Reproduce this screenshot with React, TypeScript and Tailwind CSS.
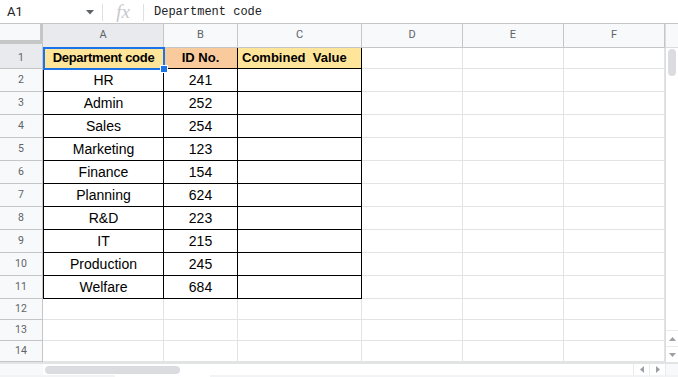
const COLS = [
  { key: "A", w: "w-[121px]" },
  { key: "B", w: "w-[74px]" },
  { key: "C", w: "w-[124px]" },
  { key: "D", w: "w-[101px]" },
  { key: "E", w: "w-[101px]" },
  { key: "F", w: "w-[101px]" },
];

const DATA: [string, string][] = [
  ["HR", "241"],
  ["Admin", "252"],
  ["Sales", "254"],
  ["Marketing", "123"],
  ["Finance", "154"],
  ["Planning", "624"],
  ["R&D", "223"],
  ["IT", "215"],
  ["Production", "245"],
  ["Welfare", "684"],
];

function RowHeader({ n, h, active }: { n: number; h: string; active?: boolean }) {
  return (
    <div
      className={`w-[43px] ${h} shrink-0 flex items-center justify-center border-r border-b border-[#c4c7c5] text-[10.5px] text-[#5f6368] font-['Roboto',sans-serif] ${
        active ? "bg-[#e8eaed]" : "bg-[#f8f9fa]"
      }`}
    >
      {n}
    </div>
  );
}

function EmptyCells() {
  return (
    <>
      <div className="w-[101px] shrink-0 border-r border-b border-[#e2e3e3]" />
      <div className="w-[101px] shrink-0 border-r border-b border-[#e2e3e3]" />
      <div className="w-[101px] shrink-0 border-r border-b border-[#e2e3e3]" />
    </>
  );
}

export default function App() {
  return (
    <div className="w-[678px] h-[377px] overflow-hidden bg-white relative font-['Liberation_Sans',Arial,sans-serif]">
      {/* Formula bar */}
      <div className="h-[24px] flex items-center border-b border-[#c4c7c5] pt-[1px]">
        <div className="w-[82px] pl-[7px] text-[13px] text-[#202124] font-['Roboto',sans-serif]">A1</div>
        <svg width="8" height="5" viewBox="0 0 8 5" className="ml-[4px]">
          <path d="M0 0h8L4 4.5z" fill="#5f6368" />
        </svg>
        <div className="ml-[8px] w-px h-[17px] bg-[#e0e0e0]" />
        <div className="w-[40px] text-center text-[19px] italic text-[#c6c9cc] font-['Liberation_Serif',serif] leading-none pb-[2px]">
          fx
        </div>
        <div className="w-px h-[17px] bg-[#e0e0e0]" />
        <div className="pl-[10px] text-[12px] text-[#202124] font-['Liberation_Mono',monospace]">Department code</div>
      </div>

      <div className="flex">
        {/* Grid */}
        <div className="w-[665px]">
          {/* Column headers */}
          <div className="flex h-[24px]">
            <div className="w-[43px] shrink-0 flex flex-col bg-[#f8f9fa]">
              <div className="h-[16px] border-r-[3px] border-[#c4c7c5]" />
              <div className="h-[4px] bg-[#c4c7c5]" />
              <div className="h-[4px] bg-[#e8eaed] border-r border-[#c4c7c5]" />
            </div>
            {COLS.map((c) => (
              <div
                key={c.key}
                className={`${c.w} shrink-0 flex items-center justify-center border-r border-b border-[#c4c7c5] text-[11px] text-[#5f6368] font-['Roboto',sans-serif] ${
                  c.key === "A" ? "bg-[#e8eaed]" : "bg-[#f8f9fa]"
                }`}
              >
                {c.key}
              </div>
            ))}
          </div>

          {/* Row 1 */}
          <div className="flex h-[21px] relative">
            <RowHeader n={1} h="h-[21px]" active />
            <div className="w-[121px] shrink-0 flex items-center justify-center bg-[#ffe599] border-l border-r border-b border-black text-[13px] font-bold text-black tracking-[-0.3px]">
              Department code
            </div>
            <div className="w-[74px] shrink-0 flex items-center justify-center bg-[#f9cb9c] border-r border-b border-black text-[13px] font-bold text-black">
              ID No.
            </div>
            <div className="w-[124px] shrink-0 flex items-center pl-[4px] bg-[#ffe599] border-r border-b border-black text-[13px] font-bold text-black whitespace-pre">
              Combined  Value
            </div>
            <EmptyCells />
            {/* Selection */}
            <div className="absolute left-[43px] top-[-1px] w-[122px] h-[23px] border-2 border-[#1a73e8]" />
            <div className="absolute left-[160px] top-[17px] w-[6px] h-[6px] bg-[#1a73e8] border border-white box-content" />
          </div>

          {/* Data rows */}
          {DATA.map(([dept, id], i) => (
            <div key={dept} className="flex h-[23px]">
              <RowHeader n={i + 2} h="h-[23px]" />
              <div className="w-[121px] shrink-0 flex items-center justify-center border-l border-r border-b border-black text-[14px] text-black">
                {dept}
              </div>
              <div className="w-[74px] shrink-0 flex items-center justify-center border-r border-b border-black text-[14px] text-black">
                {id}
              </div>
              <div className="w-[124px] shrink-0 border-r border-b border-black" />
              <EmptyCells />
            </div>
          ))}

          {/* Empty rows */}
          {[12, 13, 14].map((n) => (
            <div key={n} className="flex h-[21px]">
              <RowHeader n={n} h="h-[21px]" />
              <div className="w-[121px] shrink-0 border-r border-b border-[#e2e3e3]" />
              <div className="w-[74px] shrink-0 border-r border-b border-[#e2e3e3]" />
              <div className="w-[124px] shrink-0 border-r border-b border-[#e2e3e3]" />
              <EmptyCells />
            </div>
          ))}
        </div>

        {/* Vertical scrollbar */}
        <div className="w-[13px] h-[338px] border-l border-[#dadce0] bg-white flex flex-col">
          <div className="h-[24px] bg-[#f8f9fa] border-b border-[#dadce0]" />
          <div className="mx-[2px] mt-[1px] h-[27px] rounded-full bg-[#dadce0]" />
          <div className="flex-1" />
          <div className="h-[16px] border-t border-[#e8eaed] flex items-center justify-center">
            <svg width="7" height="4" viewBox="0 0 7 4"><path d="M0 4h7L3.5 0z" fill="#9aa0a6" /></svg>
          </div>
          <div className="h-[16px] border-t border-[#e8eaed] flex items-center justify-center">
            <svg width="7" height="4" viewBox="0 0 7 4"><path d="M0 0h7L3.5 4z" fill="#9aa0a6" /></svg>
          </div>
        </div>
      </div>

      {/* Horizontal scrollbar */}
      <div className="flex h-[13px] border-t-2 border-[#e2e3e3]">
        <div className="w-[43px] shrink-0 bg-[#f8f9fa]" />
        <div className="w-[590px] flex items-center pl-[2px]">
          <div className="w-[135px] h-[8px] rounded-full bg-[#dadce0]" />
        </div>
        <div className="w-[16px] border-l border-[#e8eaed] flex items-center justify-center">
          <svg width="4" height="7" viewBox="0 0 4 7"><path d="M4 0v7L0 3.5z" fill="#9aa0a6" /></svg>
        </div>
        <div className="w-[16px] border-l border-[#e8eaed] flex items-center justify-center">
          <svg width="4" height="7" viewBox="0 0 4 7"><path d="M0 0v7L4 3.5z" fill="#9aa0a6" /></svg>
        </div>
        <div className="w-[13px] border-l border-[#e8eaed] bg-[#f8f9fa]" />
      </div>
      <div className="flex h-[2px] bg-[#f1f3f4]">
        <div className="ml-[115px] w-[95px] bg-white" />
      </div>
    </div>
  );
}
